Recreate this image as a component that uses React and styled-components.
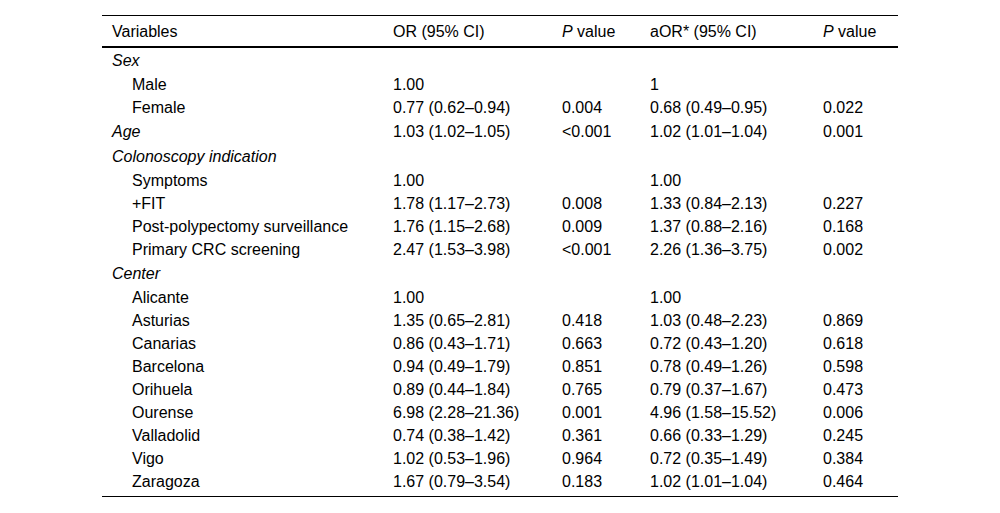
import React from 'react';
import styled, { createGlobalStyle } from 'styled-components';

const GlobalStyle = createGlobalStyle`
  html, body {
    margin: 0;
    padding: 0;
    background: #fff;
  }
  body {
    font-family: "Liberation Sans", Arial, sans-serif;
    color: #000;
  }
`;

const rows = [
    { label: 'Sex', group: true },
    { label: 'Male', or: '1.00', aor: '1' },
    { label: 'Female', or: '0.77 (0.62–0.94)', p: '0.004', aor: '0.68 (0.49–0.95)', ap: '0.022' },
    { label: 'Age', group: true, or: '1.03 (1.02–1.05)', p: '<0.001', aor: '1.02 (1.01–1.04)', ap: '0.001' },
    { label: 'Colonoscopy indication', group: true },
    { label: 'Symptoms', or: '1.00', aor: '1.00' },
    { label: '+FIT', or: '1.78 (1.17–2.73)', p: '0.008', aor: '1.33 (0.84–2.13)', ap: '0.227' },
    { label: 'Post-polypectomy surveillance', or: '1.76 (1.15–2.68)', p: '0.009', aor: '1.37 (0.88–2.16)', ap: '0.168' },
    { label: 'Primary CRC screening', or: '2.47 (1.53–3.98)', p: '<0.001', aor: '2.26 (1.36–3.75)', ap: '0.002' },
    { label: 'Center', group: true },
    { label: 'Alicante', or: '1.00', aor: '1.00' },
    { label: 'Asturias', or: '1.35 (0.65–2.81)', p: '0.418', aor: '1.03 (0.48–2.23)', ap: '0.869' },
    { label: 'Canarias', or: '0.86 (0.43–1.71)', p: '0.663', aor: '0.72 (0.43–1.20)', ap: '0.618' },
    { label: 'Barcelona', or: '0.94 (0.49–1.79)', p: '0.851', aor: '0.78 (0.49–1.26)', ap: '0.598' },
    { label: 'Orihuela', or: '0.89 (0.44–1.84)', p: '0.765', aor: '0.79 (0.37–1.67)', ap: '0.473' },
    { label: 'Ourense', or: '6.98 (2.28–21.36)', p: '0.001', aor: '4.96 (1.58–15.52)', ap: '0.006' },
    { label: 'Valladolid', or: '0.74 (0.38–1.42)', p: '0.361', aor: '0.66 (0.33–1.29)', ap: '0.245' },
    { label: 'Vigo', or: '1.02 (0.53–1.96)', p: '0.964', aor: '0.72 (0.35–1.49)', ap: '0.384' },
    { label: 'Zaragoza', or: '1.67 (0.79–3.54)', p: '0.183', aor: '1.02 (1.01–1.04)', ap: '0.464' },
];

export default function App() {
    return (
        <Page>
            <GlobalStyle />
            <Table>
                <colgroup>
                    <col style={{ width: 281 }} />
                    <col style={{ width: 169 }} />
                    <col style={{ width: 88 }} />
                    <col style={{ width: 173 }} />
                    <col />
                </colgroup>
                <thead>
                    <HeadRow>
                        <HeadCell>Variables</HeadCell>
                        <HeadCell>OR (95% CI)</HeadCell>
                        <HeadCell><i>P</i> value</HeadCell>
                        <HeadCell>aOR* (95% CI)</HeadCell>
                        <HeadCell><i>P</i> value</HeadCell>
                    </HeadRow>
                </thead>
                <tbody>
                    {rows.map((r) => (
                        <Row key={r.label} $group={r.group}>
                            <LabelCell $group={r.group}>{r.label}</LabelCell>
                            <Cell>{r.or}</Cell>
                            <Cell>{r.p}</Cell>
                            <Cell>{r.aor}</Cell>
                            <Cell>{r.ap}</Cell>
                        </Row>
                    ))}
                </tbody>
            </Table>
        </Page>
    );
}

const Page = styled.div`
    padding: 15px 0 0 102px;
`;

const Table = styled.table`
    width: 796px;
    border-collapse: collapse;
    table-layout: fixed;
    font-size: 16px;
    border-bottom: 1px solid #000;
`;

const HeadRow = styled.tr`
    border-top: 1px solid #000;
    border-bottom: 2px solid #000;
`;

const HeadCell = styled.th`
    padding: 7px 0 5px 10px;
    line-height: 18px;
    text-align: left;
    font-weight: normal;
    vertical-align: middle;

    i {
        font-style: italic;
    }
`;

const Cell = styled.td`
    padding-left: 10px;
    line-height: 18px;
    vertical-align: middle;
    white-space: nowrap;
`;

const Row = styled.tr`
    ${Cell} {
        padding-top: ${(p) => (p.$group ? '4px' : '3px')};
        padding-bottom: ${(p) => (p.$group ? '3px' : '2px')};
    }

    &:last-child ${Cell} {
        padding-bottom: 5px;
    }
`;

const LabelCell = styled(Cell)`
    && {
        padding-left: ${(p) => (p.$group ? '10px' : '30px')};
    }
    font-style: ${(p) => (p.$group ? 'italic' : 'normal')};
`;
